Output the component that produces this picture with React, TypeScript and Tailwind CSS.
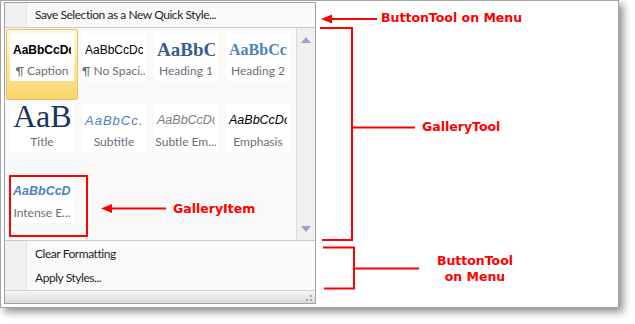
import React from "react";

const UI = { fontFamily: 'Lato, "Open Sans", sans-serif' };
const SANS = { fontFamily: '"Liberation Sans", Arial, sans-serif' };
const SERIF = { fontFamily: '"Liberation Serif", "DejaVu Serif", serif' };
const RED = { fontFamily: '"DejaVu Sans", Verdana, sans-serif' };

type Item = {
  preview: React.ReactNode;
  label: string;
  selected?: boolean;
  top?: boolean;
};

const items: Item[] = [
  {
    preview: (
      <span style={SANS} className="text-[12px] font-bold text-black">AaBbCcDdE</span>
    ),
    label: "¶ Caption",
    selected: true,
  },
  {
    preview: <span style={SANS} className="text-[12px] text-black">AaBbCcDc</span>,
    label: "¶ No Spaci...",
  },
  {
    preview: (
      <span style={SERIF} className="text-[19px] font-bold text-[#365f91] leading-none">AaBbCc</span>
    ),
    label: "Heading 1",
  },
  {
    preview: (
      <span style={SERIF} className="text-[16px] font-bold text-[#4f81bd] leading-none">AaBbCc</span>
    ),
    label: "Heading 2",
  },
  {
    preview: (
      <span style={SERIF} className="block text-[32px] text-[#17365d] leading-none -mt-[4px]">AaB</span>
    ),
    label: "Title",
    top: true,
  },
  {
    preview: (
      <span style={SANS} className="text-[13px] italic tracking-[1px] text-[#4f81bd]">AaBbCc.</span>
    ),
    label: "Subtitle",
  },
  {
    preview: <span style={SANS} className="text-[12.5px] italic text-[#808080]">AaBbCcDc</span>,
    label: "Subtle Em...",
  },
  {
    preview: <span style={SANS} className="text-[12.5px] italic text-black">AaBbCcDc</span>,
    label: "Emphasis",
  },
  {
    preview: (
      <span style={SANS} className="text-[12.5px] italic font-bold text-[#4f81bd]">AaBbCcDc</span>
    ),
    label: "Intense E...",
  },
];

function GalleryItem({ item }: { item: Item }) {
  return (
    <div
      className={
        item.selected
          ? "w-[72px] h-[71px] p-[3px] rounded-[2px] border border-[#e3c06b] bg-gradient-to-b from-[#fff8dc] via-[#ffe79a] to-[#fcd56a]"
          : "w-[72px] h-[71px] p-[4px]"
      }
    >
      <div className="w-[64px] h-[48px] bg-white flex flex-col overflow-hidden">
        <div
          className={
            item.top
              ? "h-[31px] w-[61px] pl-[3px] flex items-start overflow-hidden whitespace-nowrap shrink-0"
              : "h-[31px] w-[61px] pl-[3px] pt-[2px] flex items-center overflow-hidden whitespace-nowrap shrink-0"
          }
        >
          {item.preview}
        </div>
        <div
          style={UI}
          className="text-[12px] leading-[16px] -mt-[1px] text-center text-[#66707a] whitespace-nowrap"
        >
          {item.label}
        </div>
      </div>
    </div>
  );
}

function IconCol() {
  return <div className="w-[22px] shrink-0 bg-[#f0f0f0] border-r border-[#e2e3e3]" />;
}

function MenuRow({ text, h }: { text: string; h: string }) {
  return (
    <div className={`flex ${h}`}>
      <IconCol />
      <div
        style={UI}
        className="pl-[8px] flex items-center text-[12px] tracking-[-0.45px] text-[#1e1e1e] bg-[#fafafa] flex-1"
      >
        {text}
      </div>
    </div>
  );
}

function Menu() {
  return (
    <div className="w-[312px] h-[302px] border border-[#9ea2a8] bg-[#fafafa] flex flex-col">
      <div className="border-b border-[#c9c9c9]">
        <MenuRow text="Save Selection as a New Quick Style..." h="h-[24px]" />
      </div>
      <div className="h-[213px] flex border-b border-[#c9c9c9]">
        <div className="flex-1 pl-[1px] pt-[1px] bg-[#f9f9f9]">
          <div className="grid grid-cols-[repeat(4,72px)]">
            {items.map((it, i) => (
              <GalleryItem key={i} item={it} />
            ))}
          </div>
        </div>
        <div className="w-[19px] bg-[#f0f0f0] border-l border-[#dadada] flex flex-col items-center justify-between pt-[9px] pb-[8px]">
          <svg width="10" height="6" viewBox="0 0 10 6">
            <polygon points="5,0 10,6 0,6" fill="#97a4c3" />
          </svg>
          <svg width="10" height="6" viewBox="0 0 10 6">
            <polygon points="0,0 10,0 5,6" fill="#97a4c3" />
          </svg>
        </div>
      </div>
      <div className="flex flex-col">
        <MenuRow text="Clear Formatting" h="h-[25px]" />
        <MenuRow text="Apply Styles..." h="h-[24px]" />
      </div>
      <div className="flex-1 border-t border-[#d0d0d0] bg-gradient-to-b from-[#f6f6f6] to-[#d9dadc] flex justify-end items-end pr-[3px] pb-[2px]">
        <svg width="7" height="7" viewBox="0 0 7 7">
          <rect x="5" y="1" width="2" height="2" fill="#a0a4ab" />
          <rect x="1" y="5" width="2" height="2" fill="#a0a4ab" />
          <rect x="5" y="5" width="2" height="2" fill="#a0a4ab" />
        </svg>
      </div>
    </div>
  );
}

function Annotations() {
  return (
    <>
      <svg className="absolute left-0 top-0" width="635" height="324" viewBox="0 0 635 324">
        <g stroke="#ff0000" strokeWidth="2" fill="none">
          <line x1="330" y1="19" x2="377" y2="19" />
          <polyline points="320,28 352,28 352,240 322,240" />
          <line x1="352" y1="127.5" x2="415" y2="127.5" />
          <polyline points="323,247.5 354,247.5 354,288.5 324,288.5" />
          <line x1="354" y1="268.5" x2="419" y2="268.5" />
          <line x1="110" y1="208.5" x2="166" y2="208.5" />
          <rect x="10" y="176" width="77" height="60" />
        </g>
        <polygon points="321,19 332,14.5 332,23.5" fill="#ff0000" />
        <polygon points="101,208.5 112,204 112,213" fill="#ff0000" />
      </svg>
      <div style={RED} className="absolute left-[381px] top-[10px] text-[12.5px] font-bold text-[#ff0000] leading-[16px] whitespace-nowrap">
        ButtonTool on Menu
      </div>
      <div style={RED} className="absolute left-[422px] top-[119px] text-[12.5px] font-bold text-[#ff0000] leading-[16px] whitespace-nowrap">
        GalleryTool
      </div>
      <div style={RED} className="absolute left-[173px] top-[201px] text-[12.5px] font-bold text-[#ff0000] leading-[16px] whitespace-nowrap">
        GalleryItem
      </div>
      <div style={RED} className="absolute left-[425px] top-[253px] w-[100px] text-center text-[12.5px] font-bold text-[#ff0000] leading-[16px]">
        ButtonTool
        <br />
        on Menu
      </div>
    </>
  );
}

export default function App() {
  return (
    <div className="w-[635px] h-[324px] bg-white relative overflow-hidden">
      <div className="w-[619px] h-[308px] border border-[#a3a3a3] bg-white shadow-[4px_4px_8px_rgba(0,0,0,0.45)] pl-[3px] pt-[1px]">
        <Menu />
      </div>
      <Annotations />
    </div>
  );
}
